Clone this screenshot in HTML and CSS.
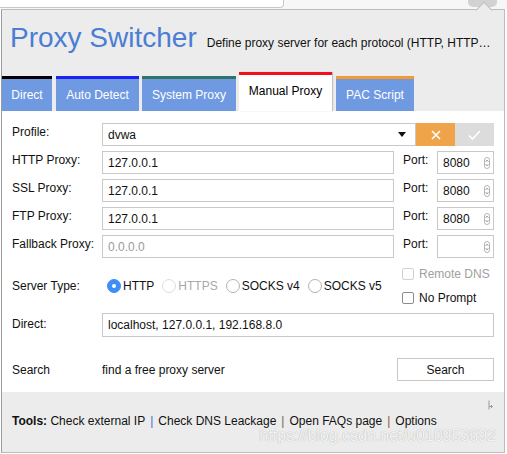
FILE: index.html
```html
<!DOCTYPE html>
<html>
<head>
<meta charset="utf-8">
<link rel="stylesheet" href="styles.css">
</head>
<body>
<div class="chrome">
  <div class="urlbar"></div>
  <div class="ext-btn"></div>
</div>
<div class="popup">
  <header class="head">
    <h1 class="title">Proxy Switcher</h1>
    <span class="subtitle">Define proxy server for each protocol (HTTP, HTTP…</span>
  </header>
  <nav class="tabs">
    <div class="tab t-direct">Direct</div>
    <div class="tab t-auto">Auto Detect</div>
    <div class="tab t-system">System Proxy</div>
    <div class="tab t-manual active">Manual Proxy</div>
    <div class="tab t-pac">PAC Script</div>
  </nav>
  <main class="panel">
    <div class="fields">
      <div class="row">
        <span class="label">Profile:</span>
        <div class="field select"><span>dvwa</span>
          <svg class="caret" width="8" height="5" viewBox="0 0 8 5"><path d="M0 0H8L4 5Z" fill="#111"/></svg>
        </div>
        <div class="btn-x"><svg width="10" height="10" viewBox="0 0 10 10"><path d="M1 1L9 9M9 1L1 9" stroke="#fff" stroke-width="1.6"/></svg></div>
        <div class="btn-ok"><svg width="13" height="10" viewBox="0 0 13 10"><path d="M1 5.5L4.5 9L12 1" stroke="#fff" stroke-width="1.6" fill="none"/></svg></div>
      </div>
      <div class="row">
        <span class="label">HTTP Proxy:</span>
        <div class="field grow">127.0.0.1</div>
        <span class="port-label">Port:</span>
        <div class="field port"><span>8080</span><span class="spin"><svg width="6" height="12" viewBox="0 0 6 12"><rect x="0.5" y="0.5" width="5" height="11" rx="2.5" fill="#fff" stroke="#b5b5b5"/><path d="M1.8 4.6L3 3.3L4.2 4.6M1.8 7.4L3 8.7L4.2 7.4" stroke="#555" stroke-width="0.8" fill="none"/></svg></span></div>
      </div>
      <div class="row">
        <span class="label">SSL Proxy:</span>
        <div class="field grow">127.0.0.1</div>
        <span class="port-label">Port:</span>
        <div class="field port"><span>8080</span><span class="spin"><svg width="6" height="12" viewBox="0 0 6 12"><rect x="0.5" y="0.5" width="5" height="11" rx="2.5" fill="#fff" stroke="#b5b5b5"/><path d="M1.8 4.6L3 3.3L4.2 4.6M1.8 7.4L3 8.7L4.2 7.4" stroke="#555" stroke-width="0.8" fill="none"/></svg></span></div>
      </div>
      <div class="row">
        <span class="label">FTP Proxy:</span>
        <div class="field grow">127.0.0.1</div>
        <span class="port-label">Port:</span>
        <div class="field port"><span>8080</span><span class="spin"><svg width="6" height="12" viewBox="0 0 6 12"><rect x="0.5" y="0.5" width="5" height="11" rx="2.5" fill="#fff" stroke="#b5b5b5"/><path d="M1.8 4.6L3 3.3L4.2 4.6M1.8 7.4L3 8.7L4.2 7.4" stroke="#555" stroke-width="0.8" fill="none"/></svg></span></div>
      </div>
      <div class="row">
        <span class="label">Fallback Proxy:</span>
        <div class="field grow placeholder">0.0.0.0</div>
        <span class="port-label">Port:</span>
        <div class="field port"><span></span><span class="spin"><svg width="6" height="12" viewBox="0 0 6 12"><rect x="0.5" y="0.5" width="5" height="11" rx="2.5" fill="#fff" stroke="#b5b5b5"/><path d="M1.8 4.6L3 3.3L4.2 4.6M1.8 7.4L3 8.7L4.2 7.4" stroke="#555" stroke-width="0.8" fill="none"/></svg></span></div>
      </div>
    </div>

    <div class="server">
      <span class="label mid">Server Type:</span>
      <div class="radios">
        <span class="opt"><span class="radio checked"></span>HTTP</span>
        <span class="opt disabled"><span class="radio"></span>HTTPS</span>
        <span class="opt"><span class="radio"></span>SOCKS v4</span>
        <span class="opt"><span class="radio"></span>SOCKS v5</span>
      </div>
      <div class="checks">
        <span class="chk disabled"><span class="box"></span>Remote DNS</span>
        <span class="chk"><span class="box"></span>No Prompt</span>
      </div>
    </div>

    <div class="row direct">
      <span class="label">Direct:</span>
      <div class="field grow">localhost, 127.0.0.1, 192.168.8.0</div>
    </div>

    <div class="row search">
      <span class="label mid">Search</span>
      <span class="find">find a free proxy server</span>
      <div class="btn-search">Search</div>
    </div>
  </main>
  <footer class="foot">
    <svg class="foot-icon" width="7" height="10" viewBox="0 0 7 10"><path d="M2 0.5V6.5H5.5M4 5L5.5 6.5L4 8M2 6.5V9.5" stroke="#9a9a9a" stroke-width="1" fill="none"/></svg>
    <b>Tools:</b> <span class="link">Check external IP</span><span class="sep s1">|</span><span class="link">Check DNS Leackage</span><span class="sep s2">|</span><span class="link">Open FAQs page</span><span class="sep s3">|</span><span class="link">Options</span>
    <span class="watermark">https://blog.csdn.net/u010953692</span>
  </footer>
</div>
</body>
</html>
```

FILE: styles.css
```css
* { box-sizing: border-box; }
html, body { margin: 0; padding: 0; }
body {
  background: #fff;
  font-family: "Liberation Sans", Arial, Helvetica, sans-serif;
  font-size: 12px;
  color: #111;
  width: 507px;
  height: 454px;
  overflow: hidden;
}

.chrome {
  height: 9px;
  display: flex;
  background: #f7f7f7;
}
.urlbar {
  width: 284px;
  height: 8px;
  background: #fff;
  border-right: 1px solid #c9c9c9;
  border-bottom: 1px solid #c9c9c9;
  border-bottom-right-radius: 4px;
}
.ext-btn {
  margin-left: auto;
  margin-right: 10px;
  width: 29px;
  height: 7px;
  background: #d2d2d2;
  border-radius: 0 0 5px 5px;
}

.popup {
  position: relative;
  margin-left: 1px;
  width: 504px;
  border: 1px solid #bcbcbc;
  border-left-color: #9c9c9c;
  background: #ececec;
}
.popup::before {
  content: "";
  position: absolute;
  top: -6px;
  left: 476px;
  width: 11px;
  height: 11px;
  background: #ececec;
  border-left: 1px solid #bcbcbc;
  border-top: 1px solid #bcbcbc;
  transform: rotate(45deg);
}

.head {
  height: 62px;
  padding: 12px 0 0 8px;
  display: flex;
  align-items: baseline;
}
.title {
  margin: 0;
  font-size: 28px;
  line-height: 32px;
  font-weight: normal;
  color: #4a7dd4;
}
.subtitle {
  margin-left: 10px;
  font-size: 12px;
  color: #111;
  white-space: nowrap;
}

.tabs {
  height: 39px;
  display: flex;
  align-items: flex-end;
}
.tab {
  height: 35px;
  border-top: 3px solid #000;
  background: #6f9ae2;
  color: #fff;
  display: flex;
  align-items: center;
  justify-content: center;
  white-space: nowrap;
}
.t-direct { width: 50px; border-top-color: #000; }
.t-auto { width: 83px; margin-left: 4px; border-top-color: #1c22f2; }
.t-system { width: 94px; margin-left: 3px; border-top-color: #2f7366; }
.t-manual { width: 93px; margin-left: 3px; }
.t-pac { width: 78px; margin-left: 4px; border-top-color: #f59a2e; }
.tab.active {
  height: 39px;
  background: #fff;
  color: #000;
  border-top-color: #f2101c;
  padding-bottom: 4px;
  box-shadow: 1px 0 1px rgba(0, 0, 0, 0.18);
  position: relative;
  z-index: 1;
}

.panel {
  background: #fff;
  padding: 12px 10px 11px 10px;
}
.fields {
  display: flex;
  flex-direction: column;
  gap: 5px;
}
.row {
  display: flex;
  align-items: center;
  height: 23px;
}
.label {
  width: 90px;
  flex: none;
  align-self: flex-start;
  margin-top: 1px;
  line-height: 16px;
  white-space: nowrap;
}
.label.mid { align-self: center; margin-top: 0; }
.field {
  height: 23px;
  border: 1px solid #c9c9c9;
  padding: 0 5px;
  display: flex;
  align-items: center;
  background: #fff;
  white-space: nowrap;
}
.grow { flex: 1; }
.placeholder { color: #9a9a9a; }
.select { flex: 1; }
.caret { margin-left: auto; margin-right: 4px; }
.btn-x, .btn-ok {
  width: 39px;
  height: 23px;
  display: flex;
  align-items: center;
  justify-content: center;
  flex: none;
}
.btn-x { background: #f0a44a; }
.btn-ok { background: #dcdcdc; }

.port-label {
  width: 43px;
  padding-left: 9px;
  flex: none;
  align-self: flex-start;
  margin-top: 1px;
  line-height: 16px;
}
.port {
  width: 57px;
  flex: none;
  padding: 0 3px 0 5px;
}
.spin { margin-left: auto; display: flex; }

.server {
  margin-top: 4px;
  height: 48px;
  display: flex;
  align-items: center;
}
.radios {
  display: flex;
  align-items: center;
  margin-left: 5px;
}
.opt {
  display: flex;
  align-items: center;
  gap: 2px;
  margin-right: 8px;
  white-space: nowrap;
}
.opt.disabled { color: #a8a8a8; }
.radio {
  width: 14px;
  height: 14px;
  border-radius: 50%;
  border: 1px solid #b3b3b3;
  background: #fff;
  position: relative;
}
.opt.disabled .radio { border-color: #dedede; }
.radio.checked {
  background: #3d8ef6;
  border-color: #3d8ef6;
}
.radio.checked::after {
  content: "";
  position: absolute;
  left: 4px;
  top: 4px;
  width: 4px;
  height: 4px;
  border-radius: 50%;
  background: #fff;
}
.checks {
  margin-left: auto;
  width: 92px;
  display: flex;
  flex-direction: column;
}
.chk {
  height: 24px;
  display: flex;
  align-items: center;
  gap: 5px;
  white-space: nowrap;
}
.chk.disabled { color: #a0a0a0; }
.box {
  width: 12px;
  height: 12px;
  border: 1px solid #8c8c8c;
  border-radius: 2px;
  background: #fff;
}
.chk.disabled .box { border-color: #d2d2d2; }

.direct { margin-top: 3px; height: 24px; }
.direct .field { height: 24px; }
.direct .label { margin-top: 3px; }

.search { margin-top: 21px; }
.find { flex: 1; }
.btn-search {
  width: 97px;
  height: 23px;
  border: 1px solid #c9c9c9;
  display: flex;
  align-items: center;
  justify-content: center;
  background: #fff;
}

.foot {
  position: relative;
  height: 60px;
  padding: 23px 10px 0 10px;
  line-height: 12px;
  color: #111;
  white-space: nowrap;
}
.foot b { font-weight: bold; }
.sep { margin: 0 5px; }
.s1 { color: #3d6fd0; }
.s2 { color: #6e6458; }
.s3 { color: #9a4f36; }
.foot-icon {
  position: absolute;
  top: 8px;
  right: 10px;
}
.watermark {
  position: absolute;
  right: 8px;
  top: 37px;
  font-size: 16px;
  line-height: 14px;
  color: rgba(255, 255, 255, 0.9);
  text-shadow: 0 0 1px rgba(0, 0, 0, 0.35);
}
```
